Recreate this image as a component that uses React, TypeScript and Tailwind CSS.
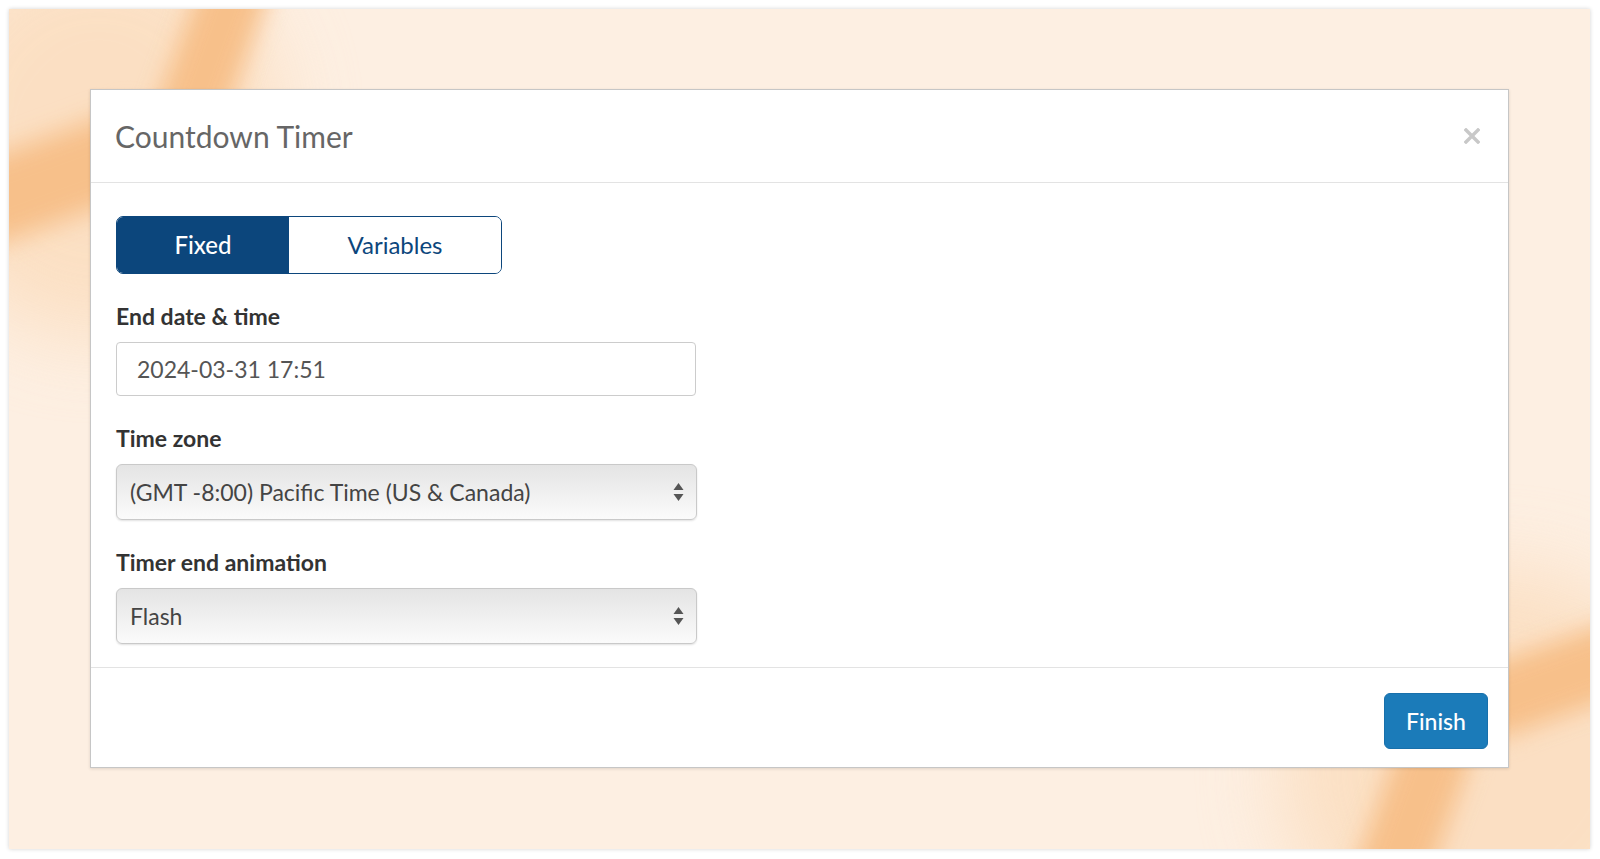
const font = { fontFamily: 'Lato, "Open Sans", sans-serif' };

function SelectArrows() {
  return (
    <svg width="11" height="20" viewBox="0 0 11 20" className="shrink-0">
      <path d="M5.5 1 L10.5 8 L0.5 8 Z" fill="#555" />
      <path d="M5.5 19 L10.5 12 L0.5 12 Z" fill="#555" />
    </svg>
  );
}

function FakeSelect({ value }: { value: string }) {
  return (
    <div className="flex h-[56px] w-[581px] items-center justify-between rounded-[6px] border border-[#c9c9c9] bg-gradient-to-b from-[#e4e4e4] to-[#fbfbfb] pl-[13px] pr-[12px] shadow-[0_1px_2px_rgba(0,0,0,0.12)]">
      <span className="text-[23px] text-[#444]">{value}</span>
      <SelectArrows />
    </div>
  );
}

function Field({ label, children }: { label: string; children: React.ReactNode }) {
  return (
    <div className="flex flex-col">
      <label className="mb-[11px] text-[23px] font-bold leading-[30px] text-[#333]">{label}</label>
      {children}
    </div>
  );
}

export default function App() {
  return (
    <div className="h-[859px] w-full bg-white pb-[10px] pl-[9px] pr-[10px] pt-[9px]" style={font}>
      <div className="relative h-full overflow-hidden bg-[#fdefe2] px-[81px] pb-[81px] pt-[80px] shadow-[0_0_4px_rgba(0,0,0,0.18)]">
        {/* background washes */}
        <div className="pointer-events-none absolute left-[-90px] top-[-70px] h-[400px] w-[360px] rounded-full bg-[#fbdcbc] opacity-80 blur-[40px]" />
        <div className="pointer-events-none absolute left-[166px] top-[-59px] h-[220px] w-[68px] rotate-[20deg] rounded-full bg-[#f7c08a] blur-[12px]" />
        <div className="pointer-events-none absolute left-[-69px] top-[128px] h-[84px] w-[230px] rotate-[-20deg] rounded-full bg-[#f7c08a] blur-[13px]" />
        <div className="pointer-events-none absolute left-[1270px] top-[560px] h-[400px] w-[420px] rounded-full bg-[#fbdcbc] opacity-80 blur-[40px]" />
        <div className="pointer-events-none absolute left-[1450px] top-[632px] h-[72px] w-[210px] rotate-[-20deg] rounded-full bg-[#f7c08a] blur-[12px]" />
        <div className="pointer-events-none absolute left-[1366px] top-[710px] h-[200px] w-[72px] rotate-[20deg] rounded-full bg-[#f7c08a] blur-[12px]" />

        {/* modal */}
        <div className="relative flex h-[679px] flex-col border border-[#c6c6c6] bg-white shadow-[0_1px_3px_rgba(0,0,0,0.12)]">
          <div className="flex h-[93px] shrink-0 items-center justify-between border-b border-[#e3e3e3] pl-[24px] pr-[27px]">
            <h1 className="text-[30px] leading-none text-[#666]">Countdown Timer</h1>
            <button className="flex h-[18px] w-[18px] items-center justify-center">
              <svg width="16" height="16" viewBox="0 0 16 16">
                <path d="M2 2 L14 14 M14 2 L2 14" stroke="#c8c8c8" strokeWidth="3.4" strokeLinecap="square" />
              </svg>
            </button>
          </div>

          <div className="flex flex-1 flex-col gap-[27px] pl-[25px] pt-[33px]">
            <div className="flex h-[58px] w-[386px] overflow-hidden rounded-[7px] border-[1.5px] border-[#0c467c]">
              <div className="flex w-[172px] items-center justify-center bg-[#0c467c] text-[24px] font-medium text-white">
                Fixed
              </div>
              <div className="flex flex-1 items-center justify-center bg-white text-[24px] text-[#0c467c]">
                Variables
              </div>
            </div>

            <Field label="End date & time">
              <div className="flex h-[54px] w-[580px] items-center rounded-[4px] border border-[#cccccc] pl-[20px] text-[23px] text-[#555]">
                2024-03-31 17:51
              </div>
            </Field>

            <Field label="Time zone">
              <FakeSelect value="(GMT -8:00) Pacific Time (US & Canada)" />
            </Field>

            <Field label="Timer end animation">
              <FakeSelect value="Flash" />
            </Field>
          </div>

          <div className="flex h-[100px] shrink-0 items-start justify-end border-t border-[#e3e3e3] pr-[20px] pt-[25px]">
            <button className="flex h-[56px] w-[104px] items-center justify-center rounded-[6px] border border-[#1870ab] bg-[#1b7bb9] text-[23px] font-medium text-white">
              Finish
            </button>
          </div>
        </div>
      </div>
    </div>
  );
}
